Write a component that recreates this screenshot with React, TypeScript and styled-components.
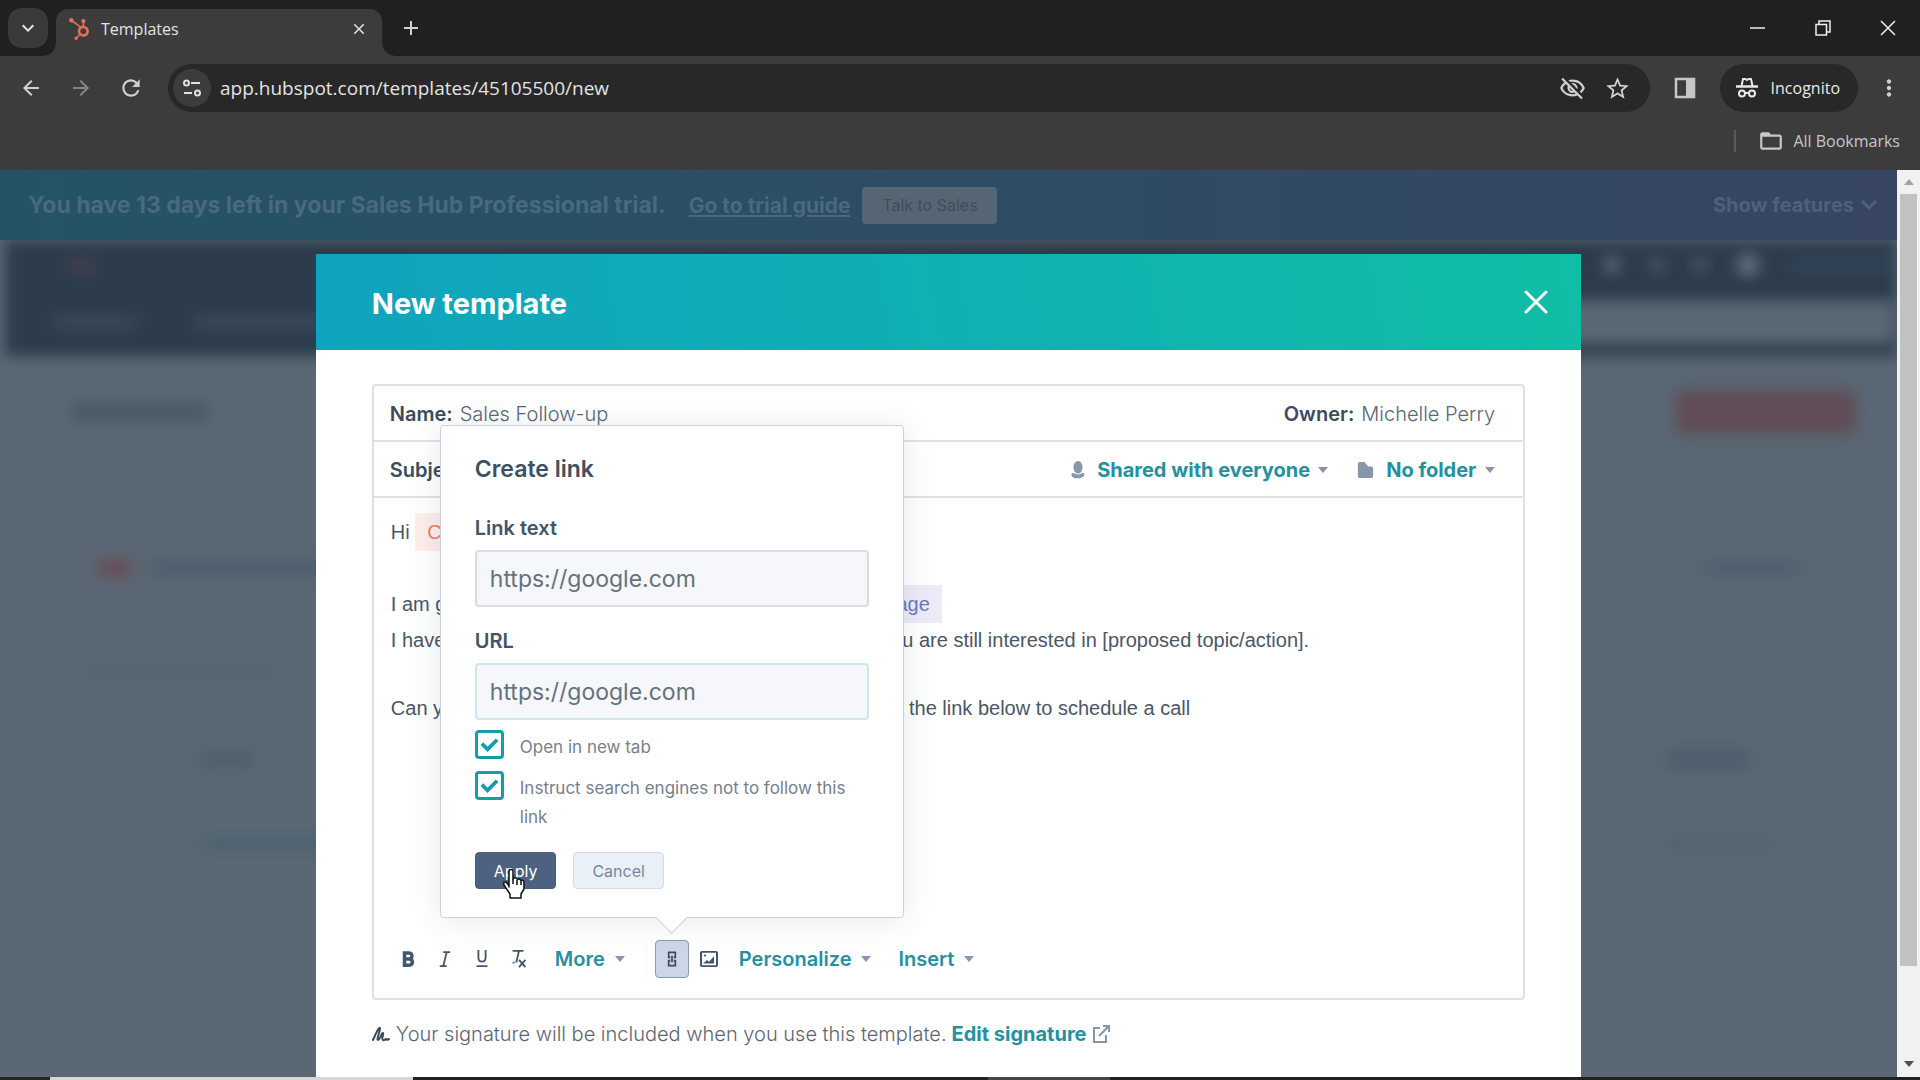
import React from 'react';
import styled, { createGlobalStyle } from 'styled-components';
import { FaHubspot } from 'react-icons/fa';
import {
  MdArrowBack, MdArrowForward, MdClose, MdAdd, MdRefresh, MdKeyboardArrowDown,
  MdOutlineVisibilityOff, MdStarBorder, MdFolderOpen, MdMoreVert,
} from 'react-icons/md';

const ui = `Inter, "Open Sans", sans-serif`;
const chromeFont = `"Open Sans", "Noto Sans", sans-serif`;
const c = {
  ink: '#3c4b5c', body: '#5b6675', teal: '#2590a0', line: '#e0e1e4', muted: '#8796ab',
};

const Global = createGlobalStyle`
  *, *::before, *::after { box-sizing: border-box; }
  body { margin: 0; font-family: ${ui}; background: #222; }
  button, input, select { font: inherit; color: inherit; border: 0; padding: 0; margin: 0; background: none; outline: none; }
  svg { display: block; flex: none; }
`;

const Window = styled.div`
  height: 100vh; display: flex; flex-direction: column; overflow: hidden;
`;

/* ---------- Browser frame ---------- */
const TabStrip = styled.div`
  height: 56px; flex: none; display: flex; align-items: center; background: #202020; color: #e3e3e3;
  padding-left: 8px; font-family: ${chromeFont};
`;
const TabSearch = styled.button`
  width: 40px; height: 40px; border-radius: 14px; background: #3a3a3a; display: grid; place-items: center;
`;
const Tab = styled.div`
  position: relative; align-self: flex-end; width: 326px; height: 47px; margin-left: 8px; padding: 0 14px 8px 12px;
  display: flex; align-items: center; gap: 11px; background: #3c3c3c; border-radius: 12px 12px 0 0;
  font-size: 16px;
  &::before, &::after {
    content: ''; position: absolute; bottom: 0; width: 12px; height: 12px;
  }
  &::before { left: -12px; background: radial-gradient(circle at 0 0, transparent 11px, #3c3c3c 12px); }
  &::after { right: -12px; background: radial-gradient(circle at 100% 0, transparent 11px, #3c3c3c 12px); }
`;
const TabTitle = styled.span` flex: 1; `;
const IconButton = styled.button<{ $w?: number; $color?: string }>`
  width: ${(p) => p.$w || 40}px; height: 40px; display: grid; place-items: center; color: ${(p) => p.$color || '#d0d0d0'};
`;
const WindowControls = styled.div` margin-left: auto; display: flex; `;
const Toolbar = styled.div`
  height: 64px; flex: none; display: flex; align-items: center; background: #3c3c3c; color: #d0d0d0;
  padding-left: 11px; font-family: ${chromeFont};
`;
const NavButtons = styled.div` display: flex; width: 157px; gap: 10px; `;
const Omnibox = styled.div`
  flex: 1; height: 48px; border-radius: 24px; background: #282828; display: flex; align-items: center; padding: 0 10px 0 5px;
`;
const SiteInfo = styled.button`
  width: 38px; height: 38px; border-radius: 19px; background: #3c3c3c; display: grid; place-items: center;
`;
const Address = styled.input`
  flex: 1; margin-left: 9px; font-size: 19px; color: #e3e3e3;
`;
const Incognito = styled.div`
  height: 48px; border-radius: 24px; background: #282828; color: #e8e8e8; font-size: 16px;
  display: flex; align-items: center; gap: 13px; padding: 0 18px 0 16px;
`;
const Bookmarks = styled.div`
  height: 50px; flex: none; display: flex; align-items: center; justify-content: flex-end; background: #3c3c3c;
  color: #c7c7c7; font-family: ${chromeFont}; font-size: 16px; padding: 0 20px 8px 0;
`;
const BookmarksButton = styled.button`
  display: flex; align-items: center; gap: 9px; border-left: 2px solid #5a5a5a; padding-left: 22px; height: 22px; line-height: 22px;
`;

/* ---------- Web page ---------- */
const Viewport = styled.div` flex: 1; min-height: 0; display: flex; `;
const Page = styled.main`
  flex: 1; min-width: 0; display: flex; flex-direction: column; background: #5a6774;
`;
const Banner = styled.div`
  height: 70px; flex: none; display: flex; align-items: center; padding: 0 18px 0 28px;
  background: linear-gradient(90deg, #235465, #2e4c66 50%, #374563);
  color: #486a7c; font-size: 23px; font-weight: 700;
`;
const BannerLink = styled.a` margin-left: 23px; color: inherit; font-size: 21px; text-decoration: underline; `;
const SalesButton = styled.button`
  margin-left: 12px; width: 135px; height: 37px; border-radius: 4px; background: #566574; color: #3e4d5b; font-size: 16px; font-weight: 400;
`;
const Features = styled.button`
  margin-left: auto; display: flex; align-items: center; gap: 5px; font-weight: 700; font-size: 20px; color: #4c617b;
`;
const Stage = styled.div`
  flex: 1; min-height: 0; display: grid; grid-template: minmax(0, 1fr) / minmax(0, 1fr);
  & > * { grid-area: 1 / 1; }
`;
const Backdrop = styled.div` overflow: hidden; `;
const Blur = styled.div` filter: blur(7px); `;
const NavBar = styled.div`
  height: 116px; background: #2c3c4c; padding: 10px 4px 10px 48px; margin-left: 5px; display: grid; gap: 20px; grid-template-rows: 30px 46px;
`;
const Row = styled.div<{ $gap?: number; $pad?: string; $h?: number }>`
  display: flex; align-items: center; gap: ${(p) => p.$gap || 16}px; padding: ${(p) => p.$pad || '0'}; height: ${(p) => p.$h || 36}px;
`;
const Mark = styled.div<{ $w: number; $h?: number; $bg?: string; $r?: number; $push?: boolean }>`
  width: ${(p) => p.$w}px; height: ${(p) => p.$h || 16}px; background: ${(p) => p.$bg || '#4f5d6e'};
  border-radius: ${(p) => p.$r || 4}px; margin-left: ${(p) => (p.$push ? 'auto' : 0)};
`;
const Modal = styled.section`
  position: relative; width: 66.7%; justify-self: center; margin-top: 14px; background: #fff; display: flex; flex-direction: column; color: ${c.body};
`;
const ModalHeader = styled.header`
  height: 96px; flex: none; display: flex; align-items: center; justify-content: space-between; padding: 0 32px 0 56px;
  background: linear-gradient(80deg, #10a3bf, #10bda5); color: #fff;
`;
const ModalTitle = styled.h1` margin: 0; padding-top: 3px; font-size: 29px; font-weight: 700; line-height: 40px; `;
const ModalBody = styled.div`
  flex: 1; min-height: 0; display: flex; flex-direction: column; padding: 34px 56px 0;
`;
const Editor = styled.div`
  flex: 1; display: flex; flex-direction: column; border: 2px solid ${c.line}; border-radius: 4px;
`;
const Field = styled.div`
  height: 56px; flex: none; display: flex; align-items: center; padding: 2px 28px 0 16px; border-bottom: 2px solid ${c.line};
  font-size: 20px; font-weight: 300;
`;
const FieldLabel = styled.label` font-weight: 600; color: ${c.ink}; margin-right: 7px; `;
const FieldInput = styled.input` flex: 1; min-width: 0; `;
const Picker = styled.label`
  display: flex; align-items: center; margin-left: 28px; color: ${c.muted};
`;
const PickerSelect = styled.select`
  appearance: none; margin: 0 8px 0 11px; color: ${c.teal}; font-weight: 700; cursor: pointer;
`;
const Caret = styled.span`
  border: 5px solid transparent; border-top: 6px solid ${c.muted}; border-bottom: 0;
`;
const Message = styled.div`
  flex: 1; padding: 15px 17px 0; font: 20px/34px "Liberation Sans", Arial, sans-serif; color: #4c5666; white-space: nowrap; outline: none;
`;
const Line = styled.p` margin: 0; min-height: 34px; `;
const Token = styled.span<{ $warm?: boolean }>`
  display: inline-block; height: 38px; line-height: 38px; padding: 0 12px;
  background: ${(p) => (p.$warm ? '#fdeeec' : '#eeebf8')}; color: ${(p) => (p.$warm ? '#f2795f' : '#6a78c0')};
`;
const Tools = styled.div` height: 80px; flex: none; display: flex; align-items: center; padding: 2px 16px 0; `;
const Tool = styled.button`
  width: 37px; height: 38px; display: grid; place-items: center; color: #44566a;
`;
const MenuButton = styled.button<{ $ml: number }>`
  display: flex; align-items: center; gap: 10px; color: ${c.teal}; font-size: 20px; font-weight: 600; margin-left: ${(p) => p.$ml}px;
`;
const Divider = styled.span` width: 1px; height: 38px; margin-left: 21px; background: #f3f5f7; `;
const LinkAnchor = styled.div` position: relative; margin: 0 2px 0 8px; `;
const LinkTool = styled.button`
  width: 34px; height: 38px; display: grid; place-items: center; background: #cbd6e6; border: 1px solid #8c9bb0; border-radius: 4px; color: #3a4a60;
`;
const Popover = styled.form`
  position: absolute; left: 50%; bottom: calc(100% + 22px); transform: translateX(-50%); width: 464px; z-index: 2;
  padding: 25px 34px 28px; background: #fff; border: 1px solid #ccd2d9; border-radius: 4px; white-space: normal;
  box-shadow: 0 2px 32px rgba(45, 62, 80, 0.12);
  &::after {
    content: ''; position: absolute; left: 50%; bottom: -12px; width: 23px; height: 23px; margin-left: -12px;
    background: #fff; border: solid #ccd2d9; border-width: 0 1px 1px 0; transform: rotate(45deg);
  }
`;
const PopTitle = styled.h2` margin: 0 0 27px; font-size: 23px; line-height: 36px; font-weight: 600; color: #3f5064; `;
const TextField = styled.div<{ $mb: number }>` margin-bottom: ${(p) => p.$mb}px; `;
const TextLabel = styled.label` display: block; font-size: 20px; font-weight: 600; line-height: 28px; color: #425466; margin-bottom: 8px; `;
const TextInput = styled.input<{ $active?: boolean }>`
  display: block; width: 100%; height: 57px; border: 2px solid ${(p) => (p.$active ? '#cfe6ee' : '#d8dde4')}; border-radius: 4px; background: #f5f7fa;
  padding: 0 13px; font-size: 23px; color: #66717e;
`;
const Check = styled.label`
  display: grid; grid-template-columns: 30px 1fr; gap: 15px; font-size: 17px; line-height: 29px; color: #77808c;
  margin-bottom: 9px;
`;
const CheckText = styled.span` padding-top: 3px; `;
const CheckBox = styled.input`
  appearance: none; width: 29px; height: 29px; border: 3px solid #169daa; border-radius: 4px;
  background: center / 19px no-repeat url("data:image/svg+xml,%3Csvg xmlns='http://www.w3.org/2000/svg' viewBox='0 0 20 20'%3E%3Cpath d='M2 9l6 6L18 5' fill='none' stroke='%23119dad' stroke-width='4'/%3E%3C/svg%3E");
`;
const Actions = styled.div` display: flex; gap: 17px; margin-top: 20px; `;
const Action = styled.button<{ $primary?: boolean }>`
  position: relative; height: 37px; padding: 0 18px; border-radius: 4px; font-size: 16px;
  border: 1px solid ${(p) => (p.$primary ? '#4a5f7a' : '#d3dbe6')};
  background: ${(p) => (p.$primary ? '#4d6280' : '#eaf0f7')}; color: ${(p) => (p.$primary ? '#fff' : '#7488a1')};
`;
const Pointer = styled.svg` position: absolute; left: 25px; top: 15px; `;
const Signature = styled.footer`
  height: 77px; flex: none; display: flex; align-items: center; padding-bottom: 10px; font-size: 20px; white-space: nowrap; font-weight: 300;
`;
const SignatureText = styled.span` margin-left: 6px; `;
const SignatureLink = styled.a`
  display: flex; align-items: center; gap: 6px; margin-left: 5px; color: ${c.teal}; font-weight: 700; text-decoration: none;
`;
const ScrollTrack = styled.div`
  width: 23px; flex: none; background: #f1f1f1; display: flex; flex-direction: column; align-items: center; padding: 9px 3px 10px;
`;
const ScrollArrow = styled.span<{ $down?: boolean }>`
  border: 5px solid transparent;
  ${(p) => (p.$down ? 'border-top: 6px solid #505050; border-bottom: 0;' : 'border-bottom: 6px solid #a3a3a3; border-top: 0;')}
`;
const ScrollRail = styled.div` flex: 1; width: 100%; margin: 9px 0; `;
const ScrollThumb = styled.div` height: 90%; background: #c1c1c1; `;
const BottomEdge = styled.div`
  height: 3px; flex: none;
  background: linear-gradient(90deg, #262626 50px, #d6d6d6 50px 413px, #222 413px 988px, #464646 988px 1110px, #222 1110px);
`;

function App() {
  return (
    <Window>
      <Global />
      <TabStrip>
        <TabSearch aria-label="Search tabs"><MdKeyboardArrowDown size={24} /></TabSearch>
        <Tab>
          <FaHubspot size={22} color="#e8705a" />
          <TabTitle>Templates</TabTitle>
          <MdClose size={18} />
        </Tab>
        <IconButton $w={58} aria-label="New tab"><MdAdd size={24} /></IconButton>
        <WindowControls>
          <IconButton $w={65} aria-label="Minimize">
            <svg width="16" height="16"><path d="M0 8h15" stroke="#eee" strokeWidth="1.500" /></svg>
          </IconButton>
          <IconButton $w={65} aria-label="Restore">
            <svg width="16" height="16" fill="none" stroke="#eee" strokeWidth="1.500"><path d="M1 4.500h10.500V15H1zM4 4V1h11v11h-3" /></svg>
          </IconButton>
          <IconButton $w={65} aria-label="Close">
            <svg width="16" height="16"><path d="M1 1l14 14M15 1L1 15" stroke="#eee" strokeWidth="1.500" /></svg>
          </IconButton>
        </WindowControls>
      </TabStrip>
      <Toolbar>
        <NavButtons>
          <IconButton aria-label="Back"><MdArrowBack size={24} /></IconButton>
          <IconButton $color="#858585" aria-label="Forward"><MdArrowForward size={24} /></IconButton>
          <IconButton aria-label="Reload"><MdRefresh size={26} /></IconButton>
        </NavButtons>
        <Omnibox>
          <SiteInfo aria-label="Site information">
            <svg width="20" height="20" fill="none" stroke="#e0e0e0" strokeWidth="2">
              <circle cx="4.500" cy="5" r="2.500" /><path d="M9 5h9M2 15h8" /><circle cx="15.500" cy="15" r="2.500" />
            </svg>
          </SiteInfo>
          <Address aria-label="Address" defaultValue="app.hubspot.com/templates/45105500/new" />
          <IconButton $w={46} aria-label="Third-party cookies blocked"><MdOutlineVisibilityOff size={27} /></IconButton>
          <IconButton $w={44} aria-label="Bookmark this tab"><MdStarBorder size={27} /></IconButton>
        </Omnibox>
        <IconButton $w={70} aria-label="Side panel">
          <svg width="22" height="22"><path d="M2 2h18v18H2z" fill="none" stroke="#c7c7c7" strokeWidth="2.500" /><path d="M12 2h8v18h-8z" fill="#c7c7c7" /></svg>
        </IconButton>
        <Incognito>
          <svg width="22" height="22" fill="none" stroke="#e8e8e8" strokeWidth="2">
            <path d="M0 9.500h22" strokeWidth="2.500" /><path d="M5.500 9L7 2h2.500l1.500 1 1.500-1H15l1.500 7" />
            <circle cx="6" cy="16.500" r="3" /><circle cx="16" cy="16.500" r="3" /><path d="M9 16h4" />
          </svg>
          Incognito
        </Incognito>
        <IconButton $w={62} aria-label="Menu"><MdMoreVert size={26} /></IconButton>
      </Toolbar>
      <Bookmarks>
        <BookmarksButton><MdFolderOpen size={26} />All Bookmarks</BookmarksButton>
      </Bookmarks>

      <Viewport>
        <Page>
          <Banner>
            <span>You have 13 days left in your Sales Hub Professional trial.</span>
            <BannerLink href="#guide">Go to trial guide</BannerLink>
            <SalesButton>Talk to Sales</SalesButton>
            <Features>
              Show features
              <svg width="20" height="20"><path d="M3 6l7 7 7-7" fill="none" stroke="currentColor" strokeWidth="3" /></svg>
            </Features>
          </Banner>
          <Stage>
            <Backdrop aria-hidden="true">
              <Blur>
                <NavBar>
                  <Row $h={30} $gap={29} $pad="0 0 0 14px">
                    <Mark $w={30} $h={18} $bg="#3f3e4d" />
                    <Mark $w={18} $h={18} $r={9} $push $bg="#566573" />
                    <Mark $w={14} $bg="#46566a" />
                    <Mark $w={14} $bg="#46566a" />
                    <Mark $w={24} $h={24} $r={12} $bg="#5c6b78" />
                    <Mark $w={104} $bg="#324357" />
                  </Row>
                  <Row $h={44} $gap={56}>
                    <Mark $w={84} $h={12} $bg="#3b4a5b" />
                    <Mark $w={180} $h={12} $bg="#3b4a5b" />
                    <Mark $w={500} $h={44} $push $bg="#5a6774" />
                  </Row>
                </NavBar>
                <Row $h={116} $pad="0 41px 5px 70px">
                  <Mark $w={138} $h={20} $bg="#4b5968" />
                  <Mark $w={180} $h={44} $push $bg="#604d57" />
                </Row>
                <Row $h={192} $pad="0 97px 0 99px" $gap={22}>
                  <Mark $w={32} $h={20} $bg="#694e5a" />
                  <Mark $w={240} $h={14} />
                  <Mark $w={96} $h={12} $push />
                </Row>
                <Row $h={16} $pad="0 85px"><Mark $w={184} $h={10} $bg="#53616f" /></Row>
                <Row $h={158} $pad="0 147px 0 200px">
                  <Mark $w={54} $h={16} $bg="#505e6d" />
                  <Mark $w={84} $h={24} $push $bg="#505e6d" />
                </Row>
                <Row $h={12} $pad="0 124px 0 202px">
                  <Mark $w={170} $h={10} $bg="#48606f" />
                  <Mark $w={108} $h={9} $push $bg="#53616f" />
                </Row>
              </Blur>
            </Backdrop>

            <Modal role="dialog" aria-labelledby="modal-title">
              <ModalHeader>
                <ModalTitle id="modal-title">New template</ModalTitle>
                <IconButton $w={26} $color="#fff" aria-label="Close dialog">
                  <svg width="24" height="24"><path d="M2 2l20 20M22 2L2 22" stroke="currentColor" strokeWidth="3" strokeLinecap="round" /></svg>
                </IconButton>
              </ModalHeader>
              <ModalBody>
                <Editor>
                  <Field>
                    <FieldLabel htmlFor="name">Name:</FieldLabel>
                    <FieldInput id="name" defaultValue="Sales Follow-up" />
                    <FieldLabel as="span">Owner:</FieldLabel>
                    <span>Michelle Perry</span>
                  </Field>
                  <Field>
                    <FieldLabel htmlFor="subject">Subject:</FieldLabel>
                    <FieldInput id="subject" />
                    <Picker>
                      <svg width="16" height="18" viewBox="0 0 16 20" fill="currentColor"><ellipse cx="8" cy="7" rx="5" ry="7" /><path d="M1 14c3-2 3 1 7 1s4-3 7-1c2 6-16 8-14 0z" /></svg>
                      <PickerSelect aria-label="Sharing"><option>Shared with everyone</option></PickerSelect>
                      <Caret />
                    </Picker>
                    <Picker>
                      <svg width="19" height="18" viewBox="0 0 19 20" fill="currentColor"><path d="M1 3q0-2 2-2h5q2 0 2 3h1q1 0 1 2h4q2 0 2 2v9q0 2-2 2H3q-2 0-2-2z" /></svg>
                      <PickerSelect aria-label="Folder"><option>No folder</option></PickerSelect>
                      <Caret />
                    </Picker>
                  </Field>
                  <Message role="textbox" aria-label="Template message">
                    <Line>Hi <Token $warm>Contact: First name</Token></Line>
                    <Line />
                    <Line>I am getting in touch about the email I sent to <Token>Sender: Page</Token></Line>
                    <Line>I have been waiting to hear from you and want to ask if you are still interested in [proposed topic/action].</Line>
                    <Line />
                    <Line>Can you let me know a good day to talk. You can also use the link below to schedule a call</Line>
                  </Message>
                  <Tools>
                    <Tool aria-label="Bold">
                      <svg width="14" height="16" viewBox="0 0 16 18" fill="none" stroke="currentColor" strokeWidth="4"><path d="M4 2h4.500q4 0 4 3.500T8.500 9H4zM4 9h5q4 0 4 3.500T9 16H4z" /></svg>
                    </Tool>
                    <Tool aria-label="Italic">
                      <svg width="14" height="16" viewBox="0 0 16 18" fill="none" stroke="currentColor" strokeWidth="2"><path d="M6 1h8M2 17h8M10 1L6 17" /></svg>
                    </Tool>
                    <Tool aria-label="Underline">
                      <svg width="16" height="18" viewBox="0 0 16 20" fill="none" stroke="currentColor" strokeWidth="2"><path d="M4 0v8q0 5 4 5t4-5V0M2 18h12" /></svg>
                    </Tool>
                    <Tool aria-label="Clear formatting">
                      <svg width="18" height="20" viewBox="0 0 18 22" fill="none" stroke="currentColor" strokeWidth="2"><path d="M2 2h12M9 2L6 15M2 15h2M9 12l7 8M16 12l-7 8" /></svg>
                    </Tool>
                    <MenuButton type="button" $ml={17}>More<Caret /></MenuButton>
                    <Divider />
                    <LinkAnchor>
                      <LinkTool aria-label="Link" aria-expanded="true">
                        <svg width="10" height="18" viewBox="0 0 12 20" fill="none" stroke="currentColor" strokeWidth="2"><path d="M4 8H2V2h8v6H8M4 12H2v6h8v-6H8M6 6v8" /></svg>
                      </LinkTool>
                      <Popover>
                        <PopTitle>Create link</PopTitle>
                        <TextField $mb={20}>
                          <TextLabel htmlFor="link-text">Link text</TextLabel>
                          <TextInput id="link-text" defaultValue="https://google.com" />
                        </TextField>
                        <TextField $mb={10}>
                          <TextLabel htmlFor="link-url">URL</TextLabel>
                          <TextInput id="link-url" $active defaultValue="https://google.com" />
                        </TextField>
                        <Check><CheckBox type="checkbox" defaultChecked /><CheckText>Open in new tab</CheckText></Check>
                        <Check><CheckBox type="checkbox" defaultChecked /><CheckText>Instruct search engines not to follow this link</CheckText></Check>
                        <Actions>
                          <Action type="button" $primary>
                            Apply
                            <Pointer width="26" height="32" viewBox="0 0 26 32">
                              <path d="M8 19V3.500q0-2 2-2t2 2V11q1-2 3-1t1.500 1.500q2-1.500 3.500 1 2.500-1 3 1.500v7l-3 5v4H9v-4L3 17q-1-3 1-3 2 0 4 4z" fill="#fff" stroke="#111" strokeWidth="1.500" strokeLinejoin="round" />
                              <path d="M12 11v5M16 12v5M20 13v4" stroke="#111" strokeWidth="1.500" />
                            </Pointer>
                          </Action>
                          <Action type="button">Cancel</Action>
                        </Actions>
                      </Popover>
                    </LinkAnchor>
                    <Tool aria-label="Image">
                      <svg width="18" height="16" viewBox="0 0 18 18" preserveAspectRatio="none"><rect x="1" y="1" width="16" height="16" rx="1" fill="none" stroke="currentColor" strokeWidth="2" /><path d="M3 14l4-4 2 2 5-6v8z" fill="currentColor" /><circle cx="5" cy="5" r="1.200" fill="currentColor" /></svg>
                    </Tool>
                    <MenuButton type="button" $ml={11}>Personalize<Caret /></MenuButton>
                    <MenuButton type="button" $ml={27}>Insert<Caret /></MenuButton>
                  </Tools>
                </Editor>
                <Signature>
                  <svg width="18" height="18" fill="none" stroke={c.ink} strokeWidth="2" strokeLinecap="round"><path d="M1 15C4 8 7 2 8 3S4 15 6 15s4-8 5-7-2 6 0 7 3-2 3-1 1 1 3 0" /></svg>
                  <SignatureText>Your signature will be included when you use this template.</SignatureText>
                  <SignatureLink href="#signature">
                    Edit signature
                    <svg width="18" height="20" fill="none" stroke={c.muted} strokeWidth="2"><path d="M8 4H2v14h12v-7M11 2h6v6M17 2L7 12" /></svg>
                  </SignatureLink>
                </Signature>
              </ModalBody>
            </Modal>
          </Stage>
        </Page>
        <ScrollTrack aria-hidden="true">
          <ScrollArrow />
          <ScrollRail><ScrollThumb /></ScrollRail>
          <ScrollArrow $down />
        </ScrollTrack>
      </Viewport>
      <BottomEdge />
    </Window>
  );
}

export default App;
